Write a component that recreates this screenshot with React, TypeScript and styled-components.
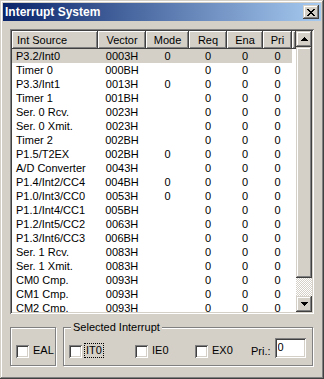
//react
import React from 'react';
import styled, { createGlobalStyle } from 'styled-components';

//data
type IntRow = { source: string; vector: string; mode: string };

const rows: IntRow[] = [
  { source: 'P3.2/Int0', vector: '0003H', mode: '0' },
  { source: 'Timer 0', vector: '000BH', mode: '' },
  { source: 'P3.3/Int1', vector: '0013H', mode: '0' },
  { source: 'Timer 1', vector: '001BH', mode: '' },
  { source: 'Ser. 0 Rcv.', vector: '0023H', mode: '' },
  { source: 'Ser. 0 Xmit.', vector: '0023H', mode: '' },
  { source: 'Timer 2', vector: '002BH', mode: '' },
  { source: 'P1.5/T2EX', vector: '002BH', mode: '0' },
  { source: 'A/D Converter', vector: '0043H', mode: '' },
  { source: 'P1.4/Int2/CC4', vector: '004BH', mode: '0' },
  { source: 'P1.0/Int3/CC0', vector: '0053H', mode: '0' },
  { source: 'P1.1/Int4/CC1', vector: '005BH', mode: '' },
  { source: 'P1.2/Int5/CC2', vector: '0063H', mode: '' },
  { source: 'P1.3/Int6/CC3', vector: '006BH', mode: '' },
  { source: 'Ser. 1 Rcv.', vector: '0083H', mode: '' },
  { source: 'Ser. 1 Xmit.', vector: '0083H', mode: '' },
  { source: 'CM0 Cmp.', vector: '0093H', mode: '' },
  { source: 'CM1 Cmp.', vector: '0093H', mode: '' },
  { source: 'CM2 Cmp.', vector: '0093H', mode: '' },
];

const columns = [
  { title: 'Int Source', width: 86 },
  { title: 'Vector', width: 48 },
  { title: 'Mode', width: 43 },
  { title: 'Req', width: 38 },
  { title: 'Ena', width: 36 },
  { title: 'Pri', width: 29 },
];

//styles
const GlobalStyle = createGlobalStyle`
  html, body {
    margin: 0;
    padding: 0;
    background: #d4d0c8;
  }
  body {
    font-family: "Liberation Sans", Arial, sans-serif;
    font-size: 11px;
    color: #000;
  }
`;

const raised = `
  background: #d4d0c8;
  box-shadow: inset -1px -1px #404040, inset 1px 1px #d4d0c8,
    inset -2px -2px #808080, inset 2px 2px #ffffff;
`;

const sunken = `
  box-shadow: inset 1px 1px #808080, inset -1px -1px #ffffff,
    inset 2px 2px #404040, inset -2px -2px #d4d0c8;
`;

const Window = styled.div`
  width: 324px;
  height: 379px;
  box-sizing: border-box;
  padding: 3px;
  background: #d4d0c8;
  display: flex;
  flex-direction: column;
  box-shadow: inset -1px -1px #404040, inset 1px 1px #d4d0c8,
    inset -2px -2px #808080, inset 2px 2px #ffffff;
`;

const TitleBar = styled.div`
  height: 18px;
  flex-shrink: 0;
  display: flex;
  align-items: center;
  justify-content: space-between;
  padding: 0 2px;
  background: linear-gradient(to right, #0a246a, #a6caf0);
`;

const Title = styled.span`
  color: #fff;
  font-weight: bold;
  font-size: 12px;
  line-height: 18px;
`;

const CloseButton = styled.div`
  width: 16px;
  height: 14px;
  ${raised}
  display: flex;
  align-items: center;
  justify-content: center;
`;

const ListView = styled.div`
  margin: 8px 7px 0 7px;
  height: 285px;
  box-sizing: border-box;
  padding: 2px;
  display: flex;
  background: #fff;
  ${sunken}
`;

const ListMain = styled.div`
  flex: 1;
  display: flex;
  flex-direction: column;
  overflow: hidden;
  background: #fff;
`;

const Header = styled.div`
  height: 18px;
  flex-shrink: 0;
  display: flex;
`;

const HeaderCell = styled.div<{ $w: number; $left?: boolean }>`
  width: ${(p) => p.$w}px;
  flex-shrink: 0;
  box-sizing: border-box;
  line-height: 18px;
  padding-left: ${(p) => (p.$left ? '5px' : '0')};
  text-align: ${(p) => (p.$left ? 'left' : 'center')};
  white-space: nowrap;
  background: #d4d0c8;
  box-shadow: inset -1px -1px #404040, inset 1px 1px #ffffff,
    inset -2px -2px #808080;
`;

const HeaderFiller = styled.div`
  flex: 1;
  background: #d4d0c8;
  box-shadow: inset -1px -1px #404040, inset 1px 1px #ffffff,
    inset -2px -2px #808080;
`;

const Row = styled.div<{ $selected?: boolean }>`
  height: 14px;
  flex-shrink: 0;
  display: flex;
  width: 280px;
  background: ${(p) => (p.$selected ? '#d4d0c8' : 'transparent')};
`;

const Cell = styled.div<{ $w: number; $left?: boolean }>`
  width: ${(p) => p.$w}px;
  flex-shrink: 0;
  box-sizing: border-box;
  line-height: 14px;
  padding-left: ${(p) => (p.$left ? '4px' : '0')};
  text-align: ${(p) => (p.$left ? 'left' : 'center')};
  white-space: nowrap;
  overflow: hidden;
`;

const ScrollBar = styled.div`
  width: 16px;
  flex-shrink: 0;
  display: flex;
  flex-direction: column;
`;

const ScrollButton = styled.div`
  width: 16px;
  height: 16px;
  flex-shrink: 0;
  ${raised}
  display: flex;
  align-items: center;
  justify-content: center;
`;

const Thumb = styled.div`
  height: 231px;
  flex-shrink: 0;
  ${raised}
`;

const Track = styled.div`
  flex: 1;
  background: repeating-conic-gradient(#d4d0c8 0 25%, #ffffff 0 50%) 0 0 / 2px 2px;
`;

const BottomRow = styled.div`
  display: flex;
  gap: 7px;
  margin: 13px 0 0 7px;
`;

const GroupBox = styled.div<{ $w: number }>`
  position: relative;
  width: ${(p) => p.$w}px;
  height: 39px;
  box-sizing: border-box;
  border: 1px solid #808080;
  box-shadow: inset 1px 1px #ffffff, 1px 1px #ffffff;
  display: flex;
  align-items: flex-end;
  padding: 0 0 7px 5px;
`;

const GroupLabel = styled.span`
  position: absolute;
  top: -7px;
  left: 7px;
  padding: 0 2px;
  line-height: 13px;
  background: #d4d0c8;
  white-space: nowrap;
`;

const CheckItem = styled.div<{ $w?: number }>`
  display: flex;
  align-items: flex-end;
  gap: 2px;
  width: ${(p) => (p.$w ? `${p.$w}px` : 'auto')};
  flex-shrink: 0;
`;

const CheckBox = styled.div`
  width: 13px;
  height: 13px;
  flex-shrink: 0;
  box-sizing: border-box;
  background: #fff;
  ${sunken}
`;

const CheckLabel = styled.span<{ $focus?: boolean }>`
  line-height: 13px;
  padding: 0 1px;
  border: 1px dotted ${(p) => (p.$focus ? '#000' : 'transparent')};
  white-space: nowrap;
`;

const FieldLabel = styled.span`
  line-height: 13px;
  margin-right: 2px;
  white-space: nowrap;
`;

const PriInput = styled.input`
  width: 31px;
  height: 20px;
  box-sizing: border-box;
  border: none;
  outline: none;
  margin: 0;
  padding: 0 0 3px 3px;
  font: inherit;
  font-size: 11px;
  color: #000;
  background: #fff;
  ${sunken}
`;

//icons
const CloseGlyph = () => (
  <svg width="8" height="7" viewBox="0 0 8 7">
    <path
      d="M0 0h2v1h1v1h2V1h1V0h2v1H7v1H6v1H5v1h1v1h1v1h1v1H6V6H5V5H3v1H2v1H0V6h1V5h1V4h1V3H2V2H1V1H0z"
      fill="#000"
    />
  </svg>
);

const Arrow = ({ down }: { down?: boolean }) => (
  <svg width="7" height="4" viewBox="0 0 7 4">
    <path
      d={down ? 'M0 0h7v1H6v1H5v1H4v1H3V3H2V2H1V1H0z' : 'M3 0h1v1h1v1h1v1h1v1H0V3h1V2h1V1h1z'}
      fill="#000"
    />
  </svg>
);

//component definition
const App: React.FC = () => {
  return (
    <>
      <GlobalStyle />
      <Window>
        <TitleBar>
          <Title>Interrupt System</Title>
          <CloseButton>
            <CloseGlyph />
          </CloseButton>
        </TitleBar>

        <ListView>
          <ListMain>
            <Header>
              {columns.map((c, i) => (
                <HeaderCell key={c.title} $w={c.width} $left={i === 0}>
                  {c.title}
                </HeaderCell>
              ))}
              <HeaderFiller />
            </Header>
            {rows.map((r, i) => (
              <Row key={i} $selected={i === 0}>
                <Cell $w={columns[0].width} $left>
                  {r.source}
                </Cell>
                <Cell $w={columns[1].width}>{r.vector}</Cell>
                <Cell $w={columns[2].width}>{r.mode}</Cell>
                <Cell $w={columns[3].width}>0</Cell>
                <Cell $w={columns[4].width}>0</Cell>
                <Cell $w={columns[5].width}>0</Cell>
              </Row>
            ))}
          </ListMain>
          <ScrollBar>
            <ScrollButton>
              <Arrow />
            </ScrollButton>
            <Thumb />
            <Track />
            <ScrollButton>
              <Arrow down />
            </ScrollButton>
          </ScrollBar>
        </ListView>

        <BottomRow>
          <GroupBox $w={46}>
            <CheckItem>
              <CheckBox />
              <CheckLabel>EAL</CheckLabel>
            </CheckItem>
          </GroupBox>
          <GroupBox $w={250}>
            <GroupLabel>Selected Interrupt</GroupLabel>
            <CheckItem $w={66}>
              <CheckBox />
              <CheckLabel $focus>IT0</CheckLabel>
            </CheckItem>
            <CheckItem $w={60}>
              <CheckBox />
              <CheckLabel>IE0</CheckLabel>
            </CheckItem>
            <CheckItem $w={56}>
              <CheckBox />
              <CheckLabel>EX0</CheckLabel>
            </CheckItem>
            <CheckItem>
              <FieldLabel>Pri.:</FieldLabel>
              <PriInput defaultValue="0" />
            </CheckItem>
          </GroupBox>
        </BottomRow>
      </Window>
    </>
  );
};

export default App;
